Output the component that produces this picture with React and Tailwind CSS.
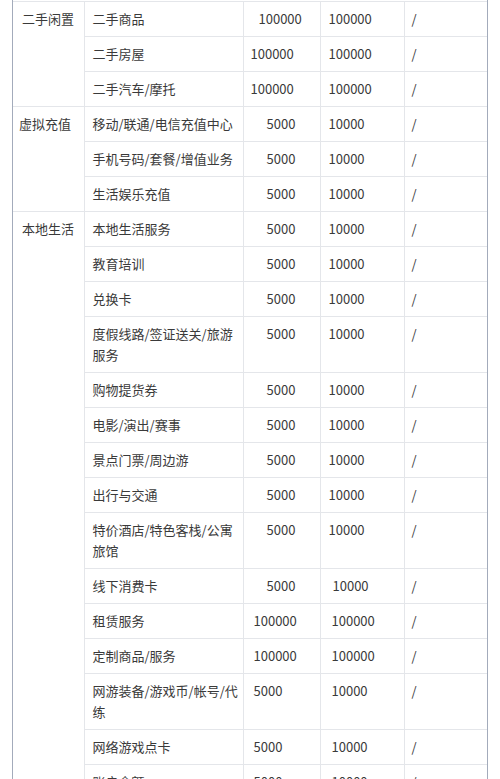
import React from "react";

const groups = [
  {
    name: "二手闲置",
    np: "pl-[9px]",
    rows: [
      ["二手商品", "100000", "100000", "pl-[15px]", "pl-[8px]"],
      ["二手房屋", "100000", "100000", "pl-[7px]", "pl-[8px]"],
      ["二手汽车/摩托", "100000", "100000", "pl-[7px]", "pl-[8px]"],
    ],
  },
  {
    name: "虚拟充值",
    np: "pl-[6px]",
    rows: [
      ["移动/联通/电信充值中心", "5000", "10000", "pl-[23px]", "pl-[8px]"],
      ["手机号码/套餐/增值业务", "5000", "10000", "pl-[23px]", "pl-[8px]"],
      ["生活娱乐充值", "5000", "10000", "pl-[23px]", "pl-[8px]"],
    ],
  },
  {
    name: "本地生活",
    np: "pl-[9px]",
    rows: [
      ["本地生活服务", "5000", "10000", "pl-[23px]", "pl-[8px]"],
      ["教育培训", "5000", "10000", "pl-[23px]", "pl-[8px]"],
      ["兑换卡", "5000", "10000", "pl-[23px]", "pl-[8px]"],
      ["度假线路/签证送关/旅游服务", "5000", "10000", "pl-[23px]", "pl-[8px]"],
      ["购物提货券", "5000", "10000", "pl-[23px]", "pl-[8px]"],
      ["电影/演出/赛事", "5000", "10000", "pl-[23px]", "pl-[8px]"],
      ["景点门票/周边游", "5000", "10000", "pl-[23px]", "pl-[8px]"],
      ["出行与交通", "5000", "10000", "pl-[23px]", "pl-[8px]"],
      ["特价酒店/特色客栈/公寓旅馆", "5000", "10000", "pl-[23px]", "pl-[8px]"],
      ["线下消费卡", "5000", "10000", "pl-[23px]", "pl-[12px]"],
      ["租赁服务", "100000", "100000", "pl-[10px]", "pl-[11px]"],
      ["定制商品/服务", "100000", "100000", "pl-[10px]", "pl-[11px]"],
      ["网游装备/游戏币/帐号/代练", "5000", "10000", "pl-[10px]", "pl-[11px]"],
      ["网络游戏点卡", "5000", "10000", "pl-[10px]", "pl-[11px]"],
      ["账户余额", "5000", "10000", "pl-[10px]", "pl-[11px]"],
    ],
  },
];

const cell = "border border-[#e4e6ea] align-top pt-[6px] pb-[7px] leading-[21px]";

export default function App() {
  return (
    <div
      className="w-[500px] h-[779px] overflow-hidden bg-white text-[13px] text-[#3a3a3a]"
      style={{ fontFamily: '"Noto Sans CJK SC", "Noto Sans", sans-serif' }}
    >
      <div className="ml-[12px] w-[476px] border-l border-r border-[#a3abbb] pt-[1px]">
        <table className="w-[474px] table-fixed border-collapse">
          <colgroup>
            <col className="w-[71px]" />
            <col className="w-[159px]" />
            <col className="w-[77px]" />
            <col className="w-[84px]" />
            <col className="w-[83px]" />
          </colgroup>
          <tbody>
            {groups.map((g) =>
              g.rows.map((r, i) => (
                <tr key={g.name + i}>
                  {i === 0 && (
                    <td
                      rowSpan={g.rows.length}
                      className={`${cell} border-l-0 ${g.np} whitespace-nowrap`}
                    >
                      {g.name}
                    </td>
                  )}
                  <td className={`${cell} pl-[8px] pr-[2px]`}>{r[0]}</td>
                  <td className={`${cell} ${r[3]}`}>{r[1]}</td>
                  <td className={`${cell} ${r[4]}`}>{r[2]}</td>
                  <td className={`${cell} border-r-0 pl-[7px]`}>/</td>
                </tr>
              ))
            )}
          </tbody>
        </table>
      </div>
    </div>
  );
}
